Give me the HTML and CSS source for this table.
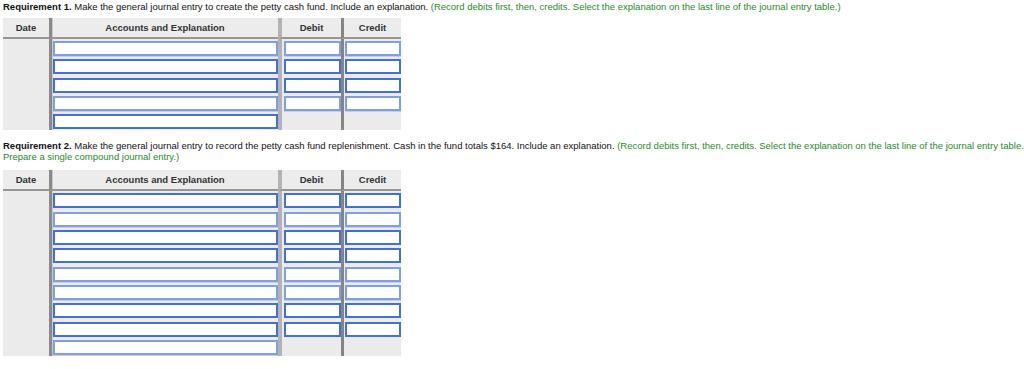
FILE: index.html
```html
<!DOCTYPE html>
<html lang="en">
<head>
    <meta charset="UTF-8">
    <meta name="viewport" content="width=device-width, initial-scale=1.0">
    <title>Petty Cash Journal Entries</title>
    <link rel="stylesheet" href="styles.css">
</head>
<body>
    <p class="req first">
        <b>Requirement 1.</b> Make the general journal entry to create the petty cash fund. Include an explanation.
        <span class="hint">(Record debits first, then, credits. Select the explanation on the last line of the journal entry table.)</span>
    </p>
    <table class="journal">
        <thead>
            <tr>
                <th class="date">Date</th>
                <th class="acct">Accounts and Explanation</th>
                <th class="debit">Debit</th>
                <th class="credit">Credit</th>
            </tr>
        </thead>
        <tbody>
            <tr>
                <td class="date" rowspan="5"></td>
                <td class="acct"><input type="text" class="soft"></td>
                <td class="debit"><input type="text" class="soft"></td>
                <td class="credit"><input type="text" class="soft"></td>
            </tr>
            <tr>
                <td class="acct"><input type="text"></td>
                <td class="debit"><input type="text"></td>
                <td class="credit"><input type="text"></td>
            </tr>
            <tr>
                <td class="acct"><input type="text"></td>
                <td class="debit"><input type="text"></td>
                <td class="credit"><input type="text"></td>
            </tr>
            <tr>
                <td class="acct"><input type="text" class="soft"></td>
                <td class="debit"><input type="text" class="soft"></td>
                <td class="credit"><input type="text" class="soft"></td>
            </tr>
            <tr>
                <td class="acct"><input type="text"></td>
                <td class="debit"></td>
                <td class="credit"></td>
            </tr>
        </tbody>
    </table>

    <p class="req second">
        <b>Requirement 2.</b> Make the general journal entry to record the petty cash fund replenishment. Cash in the fund totals $164. Include an explanation.
        <span class="hint">(Record debits first, then, credits. Select the explanation on the last line of the journal entry table.<br>Prepare a single compound journal entry.)</span>
    </p>
    <table class="journal">
        <thead>
            <tr>
                <th class="date">Date</th>
                <th class="acct">Accounts and Explanation</th>
                <th class="debit">Debit</th>
                <th class="credit">Credit</th>
            </tr>
        </thead>
        <tbody>
            <tr>
                <td class="date" rowspan="9"></td>
                <td class="acct"><input type="text"></td>
                <td class="debit"><input type="text"></td>
                <td class="credit"><input type="text"></td>
            </tr>
            <tr>
                <td class="acct"><input type="text" class="soft"></td>
                <td class="debit"><input type="text" class="soft"></td>
                <td class="credit"><input type="text" class="soft"></td>
            </tr>
            <tr>
                <td class="acct"><input type="text"></td>
                <td class="debit"><input type="text"></td>
                <td class="credit"><input type="text"></td>
            </tr>
            <tr>
                <td class="acct"><input type="text"></td>
                <td class="debit"><input type="text"></td>
                <td class="credit"><input type="text"></td>
            </tr>
            <tr>
                <td class="acct"><input type="text" class="soft"></td>
                <td class="debit"><input type="text" class="soft"></td>
                <td class="credit"><input type="text" class="soft"></td>
            </tr>
            <tr>
                <td class="acct"><input type="text" class="soft"></td>
                <td class="debit"><input type="text" class="soft"></td>
                <td class="credit"><input type="text" class="soft"></td>
            </tr>
            <tr>
                <td class="acct"><input type="text"></td>
                <td class="debit"><input type="text"></td>
                <td class="credit"><input type="text"></td>
            </tr>
            <tr>
                <td class="acct"><input type="text"></td>
                <td class="debit"><input type="text"></td>
                <td class="credit"><input type="text"></td>
            </tr>
            <tr>
                <td class="acct"><input type="text" class="soft"></td>
                <td class="debit"></td>
                <td class="credit"></td>
            </tr>
        </tbody>
    </table>
</body>
</html>
```

FILE: styles.css
```css
body {
    font-family: "Liberation Sans", Arial, sans-serif;
    font-size: 9.5px;
    color: #111;
    margin: 0;
    padding: 0 3px;
    background: #fff;
    overflow: hidden;
}
.req {
    margin: 0;
    line-height: 11px;
    white-space: nowrap;
}
.req.first { padding-top: 1px; }
.req.second { margin-top: 10px; }
.hint { color: #1f8a1f; }

.journal {
    border-collapse: separate;
    border-spacing: 0;
    background: #ebebeb;
    table-layout: fixed;
    width: 398px;
}
.req.first + .journal { margin-top: 6px; }
.req.second + .journal { margin-top: 8px; }

.journal th {
    height: 19px;
    padding: 0;
    font-size: 9.5px;
    font-weight: bold;
    color: #333;
    background: #ececec;
    border-bottom: 2px solid #979797;
    text-align: center;
}
.journal td {
    height: 18.3px;
    padding: 0;
    vertical-align: top;
}

.date { width: 46px; }
.acct { width: 226px; border-left: 3px solid #8a8a8a; box-shadow: inset 1px 0 0 #c9c9c9; }
.debit { width: 59px; border-left: 4px solid #b3b3b3; }
.credit { width: 57px; border-left: 3px solid #858585; }

.journal td.acct { padding-left: 1px; }
.journal td.debit { padding-left: 2px; }
.journal td.credit { padding-left: 1px; }

.journal input {
    display: block;
    box-sizing: border-box;
    height: 15px;
    margin-top: 2px;
    padding: 0;
    border: 2px solid #4470d2;
    background: #fff;
    outline: none;
}
.journal input.soft {
    border-color: #809fe2;
    box-shadow: 0 1px 0 #c3cfe8;
}
.acct input { width: 225px; }
.debit input { width: 57px; }
.credit input { width: 56px; }
```
